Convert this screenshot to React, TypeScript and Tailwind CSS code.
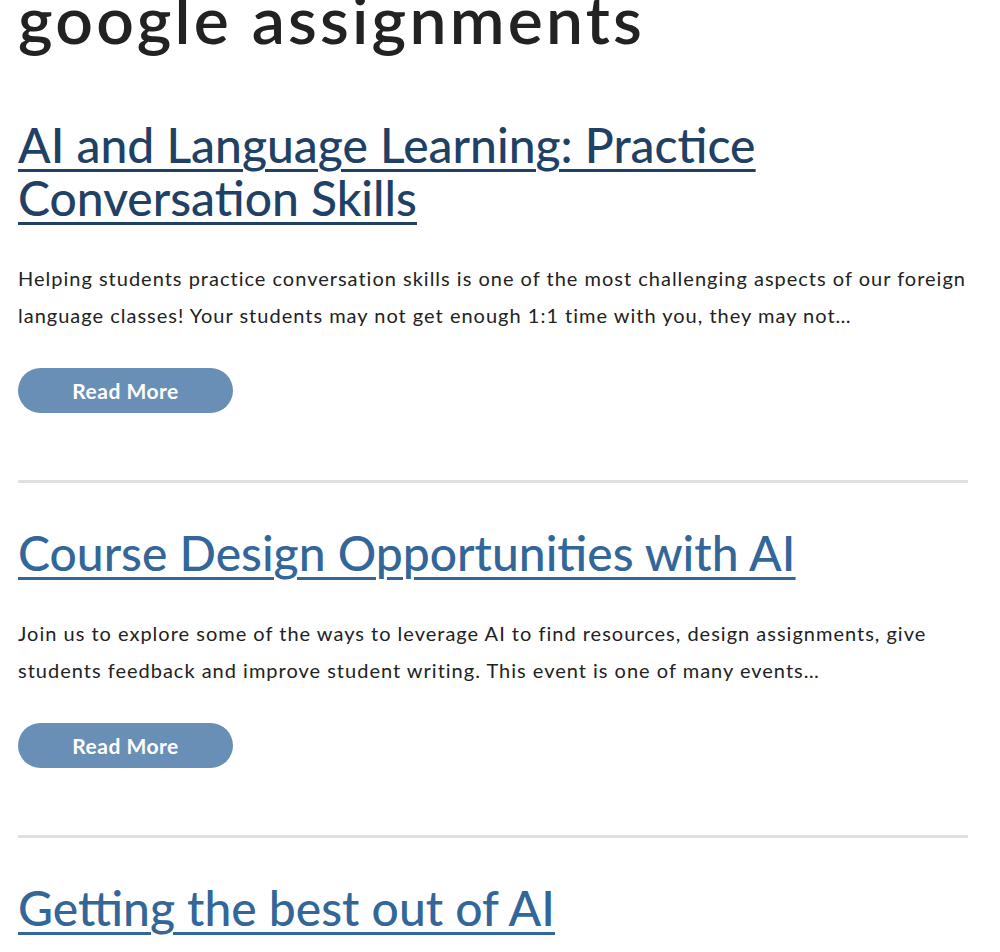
const posts = [
  {
    title: 'AI and Language Learning: Practice Conversation Skills',
    excerpt:
      'Helping students practice conversation skills is one of the most challenging aspects of our foreign language classes! Your students may not get enough 1:1 time with you, they may not…',
    visited: true,
  },
  {
    title: 'Course Design Opportunities with AI',
    excerpt:
      'Join us to explore some of the ways to leverage AI to find resources, design assignments, give students feedback and improve student writing. This event is one of many events…',
    visited: false,
  },
  {
    title: 'Getting the best out of AI',
    excerpt: '',
    visited: false,
  },
];

export default function App() {
  return (
    <div className="min-h-screen bg-white overflow-hidden">
      <main className="w-[950px] ml-[18px]">
        <h1 className="mt-[-14px] text-[66px] leading-[66px] font-semibold tracking-[3.2px] text-[#222222] font-['Lato',sans-serif]">
          google assignments
        </h1>

        <div className="mt-[66px] flex flex-col">
          {posts.map((post, i) => (
            <article key={post.title} className="flex flex-col">
              {i > 0 && <hr className="border-0 h-[3px] bg-[#e0e0e0] mb-[43px]" />}
              <h2
                className={`text-[48px] leading-[53px] font-medium font-['Lato',sans-serif] underline decoration-[3px] underline-offset-[6px] ${
                  post.visited ? 'text-[#1f4165]' : 'text-[#336699]'
                }`}
              >
                <a href="#">{post.title}</a>
              </h2>
              {post.excerpt && (
                <>
                  <p className="mt-[36px] text-[20px] leading-[37px] tracking-[1px] text-[#222222] font-['Lato',sans-serif]">
                    {post.excerpt}
                  </p>
                  <button className="mt-[34px] mb-[67px] w-[215px] h-[45px] rounded-full bg-[#6a8fb6] text-white text-[21px] tracking-[0.5px] font-bold font-['Lato',sans-serif]">
                    Read More
                  </button>
                </>
              )}
            </article>
          ))}
        </div>
      </main>
    </div>
  );
}
